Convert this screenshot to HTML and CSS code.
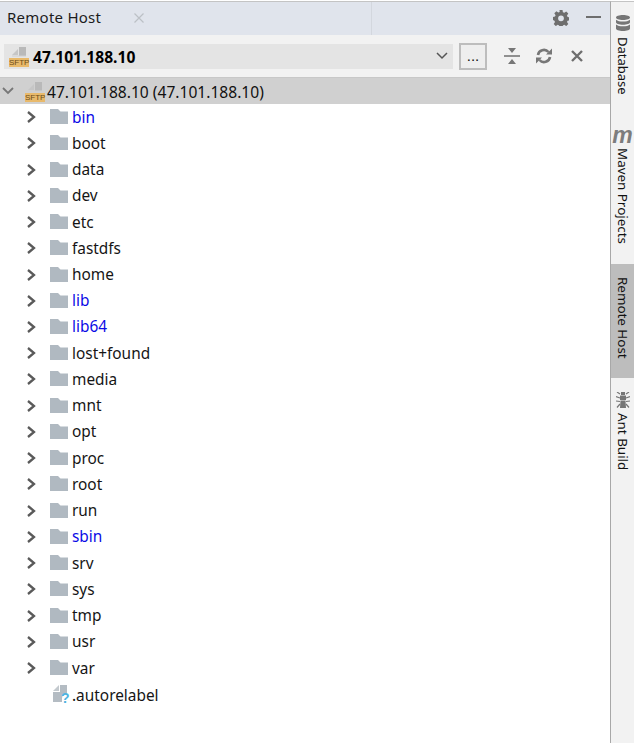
FILE: index.html
```html
<!DOCTYPE html>
<html lang="en">
<head>
<meta charset="utf-8">
<title>Remote Host</title>
<link rel="stylesheet" href="styles.css">
</head>
<body>
<svg class="defs" width="0" height="0" aria-hidden="true">
  <defs>
    <symbol id="chev" viewBox="0 0 12 14"><path d="M3 2l6 5-6 5" fill="none" stroke="#5a5a5a" stroke-width="2.300"/></symbol>
    <symbol id="folder" viewBox="0 0 18 15"><path d="M0 0h8l2.500 2.500H18V15H0z" fill="#b0b9c1"/></symbol>
    <symbol id="sftp" viewBox="0 0 20 21"><path d="M3 9l6-6v6z" fill="#c6c6c6"/><path d="M10 1h7v9h-7z" fill="#b9b9b9"/><path d="M3 9.500h14v1H3z" fill="#cfcfcf"/><path d="M0 12h20v9H0z" fill="#e8b96b"/></symbol>
  </defs>
</svg>
<div class="app">
  <main class="panel">
    <header class="tabbar">
      <div class="tab">
        <span class="tab-title">Remote Host</span>
        <svg class="tab-close" viewBox="0 0 10 10" width="10" height="10"><path d="M0.500 0.500l9 9M9.500 0.500l-9 9" stroke="#bcc0c6" stroke-width="1.200"/></svg>
      </div>
      <div class="tab-rest">
        <svg class="gear" viewBox="0 0 16 16" width="16" height="16"><path fill="#6e6e6e" fill-rule="evenodd" d="M6.500 0h3l.4 2.200 1.400.6L13.200 1.500l2.100 2.100-1.300 1.900.6 1.400 2.200.4v3l-2.200.4-.6 1.400 1.300 1.900-2.100 2.100-1.900-1.300-1.400.6-.4 2.200h-3l-.4-2.200-1.400-.6-1.900 1.300-2.100-2.100 1.300-1.900-.6-1.400L-.2 10V7l2.200-.4.600-1.400-1.300-1.900 2.100-2.100 1.900 1.300 1.400-.6zM8 5.400a2.900 2.900 0 1 0 0 5.800 2.900 2.900 0 0 0 0-5.800z"/></svg>
        <span class="minimize"></span>
      </div>
    </header>
    <div class="toolbar">
      <div class="combo">
        <svg class="sftp-icon" width="20" height="21"><use href="#sftp"/></svg>
        <span class="sftp-tag tag-combo">SFTP</span>
        <span class="combo-text">47.101.188.10</span>
        <svg class="combo-arrow" viewBox="0 0 12 8" width="12" height="8"><path d="M1 1l5 5 5-5" fill="none" stroke="#555" stroke-width="1.500"/></svg>
      </div>
      <button class="more" type="button">...</button>
      <div class="actions">
        <svg viewBox="0 0 16 16" width="16" height="16"><path d="M0 7.200h16v1.600H0z" fill="#777"/><path d="M4 0h8L8 5zM4 16h8l-4-5z" fill="#777"/></svg>
        <svg viewBox="0 0 16 16" width="16" height="16"><path d="M2 7a6 5.800 0 0 1 10.500-3M14 9a6 5.800 0 0 1-10.500 3" fill="none" stroke="#777" stroke-width="2.600"/><path d="M10 6.500h6V.5zM6 9.500H0v6z" fill="#777"/></svg>
        <svg class="action-close" viewBox="0 0 12 12" width="12" height="12"><path d="M1 1l10 10M11 1L1 11" stroke="#6e6e6e" stroke-width="2.400"/></svg>
      </div>
    </div>
    <div class="root-row">
      <svg class="root-chev" viewBox="0 0 12 8" width="12" height="8"><path d="M1 1l5 5 5-5" fill="none" stroke="#777" stroke-width="1.800"/></svg>
      <svg class="sftp-icon root-icon" width="20" height="21"><use href="#sftp"/></svg>
      <span class="sftp-tag tag-root">SFTP</span>
      <span class="root-label">47.101.188.10 (47.101.188.10)</span>
    </div>
    <ul class="tree">
      <li class="row"><svg class="chev"><use href="#chev"/></svg><svg class="folder"><use href="#folder"/></svg><span class="name link">bin</span></li>
      <li class="row"><svg class="chev"><use href="#chev"/></svg><svg class="folder"><use href="#folder"/></svg><span class="name">boot</span></li>
      <li class="row"><svg class="chev"><use href="#chev"/></svg><svg class="folder"><use href="#folder"/></svg><span class="name">data</span></li>
      <li class="row"><svg class="chev"><use href="#chev"/></svg><svg class="folder"><use href="#folder"/></svg><span class="name">dev</span></li>
      <li class="row"><svg class="chev"><use href="#chev"/></svg><svg class="folder"><use href="#folder"/></svg><span class="name">etc</span></li>
      <li class="row"><svg class="chev"><use href="#chev"/></svg><svg class="folder"><use href="#folder"/></svg><span class="name">fastdfs</span></li>
      <li class="row"><svg class="chev"><use href="#chev"/></svg><svg class="folder"><use href="#folder"/></svg><span class="name">home</span></li>
      <li class="row"><svg class="chev"><use href="#chev"/></svg><svg class="folder"><use href="#folder"/></svg><span class="name link">lib</span></li>
      <li class="row"><svg class="chev"><use href="#chev"/></svg><svg class="folder"><use href="#folder"/></svg><span class="name link">lib64</span></li>
      <li class="row"><svg class="chev"><use href="#chev"/></svg><svg class="folder"><use href="#folder"/></svg><span class="name">lost+found</span></li>
      <li class="row"><svg class="chev"><use href="#chev"/></svg><svg class="folder"><use href="#folder"/></svg><span class="name">media</span></li>
      <li class="row"><svg class="chev"><use href="#chev"/></svg><svg class="folder"><use href="#folder"/></svg><span class="name">mnt</span></li>
      <li class="row"><svg class="chev"><use href="#chev"/></svg><svg class="folder"><use href="#folder"/></svg><span class="name">opt</span></li>
      <li class="row"><svg class="chev"><use href="#chev"/></svg><svg class="folder"><use href="#folder"/></svg><span class="name">proc</span></li>
      <li class="row"><svg class="chev"><use href="#chev"/></svg><svg class="folder"><use href="#folder"/></svg><span class="name">root</span></li>
      <li class="row"><svg class="chev"><use href="#chev"/></svg><svg class="folder"><use href="#folder"/></svg><span class="name">run</span></li>
      <li class="row"><svg class="chev"><use href="#chev"/></svg><svg class="folder"><use href="#folder"/></svg><span class="name link">sbin</span></li>
      <li class="row"><svg class="chev"><use href="#chev"/></svg><svg class="folder"><use href="#folder"/></svg><span class="name">srv</span></li>
      <li class="row"><svg class="chev"><use href="#chev"/></svg><svg class="folder"><use href="#folder"/></svg><span class="name">sys</span></li>
      <li class="row"><svg class="chev"><use href="#chev"/></svg><svg class="folder"><use href="#folder"/></svg><span class="name">tmp</span></li>
      <li class="row"><svg class="chev"><use href="#chev"/></svg><svg class="folder"><use href="#folder"/></svg><span class="name">usr</span></li>
      <li class="row"><svg class="chev"><use href="#chev"/></svg><svg class="folder"><use href="#folder"/></svg><span class="name">var</span></li>
      <li class="row file-row">
        <span class="file">
          <svg viewBox="0 0 19 19" width="19" height="19"><path d="M0 6l6-6v6z" fill="#c3c9ce"/><path d="M7 0h7v8.500A5 5 0 0 0 9 13.500V17H0V7h7z" fill="#b4bcc3"/></svg>
          <span class="file-q">?</span>
        </span>
        <span class="name">.autorelabel</span>
      </li>
    </ul>
  </main>
  <aside class="sidebar">
    <div class="side-item side-db">
      <svg viewBox="0 0 14 16" width="14" height="16"><path fill="#767676" d="M0 2.500C0 1 3 0 7 0s7 1 7 2.500S11 5 7 5 0 4 0 2.500zM0 4.700C1.500 6 4 6.500 7 6.500s5.500-.5 7-1.800v2.600C14 8.800 11 9.800 7 9.800S0 8.800 0 7.300zM0 9.500c1.500 1.300 4 1.800 7 1.800s5.500-.5 7-1.800v4C14 15 11 16 7 16s-7-1-7-2.500z"/></svg>
      <span class="side-text">Database</span>
    </div>
    <div class="side-item side-maven">
      <span class="maven-m">m</span>
      <span class="side-text">Maven Projects</span>
    </div>
    <div class="side-item side-remote">
      <span class="side-text">Remote Host</span>
    </div>
    <div class="side-item side-ant">
      <svg viewBox="0 0 14 16" width="14" height="16"><path fill="#767676" d="M5 0h4v3H5zM4 3.500h6V8H4zM4.500 8.500h5L10 16H4z"/><path d="M4 2L1 0M10 2l3-2M4 6L0 4.500M10 6l4-1.500M4 9.500L0 9M10 9.500l4-.5M4 12l-3 3.500M10 12l3 3.500" stroke="#767676" stroke-width="1.200" fill="none"/></svg>
      <span class="side-text">Ant Build</span>
    </div>
  </aside>
</div>
</body>
</html>
```
FILE: styles.css
```css
* { box-sizing: border-box; }
html, body { margin: 0; padding: 0; height: 100%; background: #fff; }
body { font-family: "Noto Sans", "Noto Sans CJK SC", sans-serif; color: #1a1a1a; overflow: hidden; }
.defs { position: absolute; }
.app { display: flex; width: 634px; height: 743px; }
.panel { width: 610px; display: flex; flex-direction: column; }

.tabbar { height: 34px; margin-top: 1px; border-top: 1px solid #c4c4c4; background: #e0e4ec; display: flex; flex: none; }
.tab { width: 372px; display: flex; align-items: center; padding-left: 7px; border-right: 1px solid #d3d7de; }
.tab-title { font-size: 15px; letter-spacing: .25px; color: #1c1c1c; margin-top: -3px; }
.tab-close { margin-left: 33px; margin-top: -1px; }
.tab-rest { flex: 1; display: flex; align-items: center; justify-content: flex-end; padding-right: 9px; gap: 17px; }
.gear { margin-top: -2px; }
.minimize { width: 15px; height: 2px; background: #6e6e6e; margin-top: -3px; }

.toolbar { height: 43px; flex: none; background: #f2f2f2; border-bottom: 1px solid #c8c8c8; display: flex; align-items: center; padding: 0 0 0 4px; }
.combo { width: 449px; height: 25px; background: #e4e4e4; display: flex; align-items: center; padding: 0 5px 0 5px; position: relative; }
.combo-text { font-weight: 700; font-size: 15.600px; color: #000; margin-left: 4px; flex: 1; margin-top: 1px; }
.sftp-icon { flex: none; }
.sftp-tag { position: absolute; font-family: "Liberation Sans", sans-serif; font-size: 8px; line-height: 9px; width: 20px; text-align: center; color: #6b4c18; }
.tag-combo { left: 5px; top: 14px; }
.more { width: 28px; height: 27px; margin-left: 6px; background: #eeeeee; border: 2px solid #bdbdbd; font-size: 15px; line-height: 15px; padding: 0 0 1px; color: #111; font-family: "Liberation Sans", sans-serif; }
.actions { display: flex; align-items: center; gap: 16px; margin-left: 17px; }
.action-close { margin-left: 3px; }

.root-row { height: 26px; flex: none; background: #d0d0d0; display: flex; align-items: center; padding-left: 2px; position: relative; }
.root-chev { margin-right: 11px; }
.root-icon { margin-top: 1px; }
.tag-root { left: 25px; top: 15px; }
.root-label { font-size: 15.600px; margin-left: 2px; margin-top: 1px; color: #111; }

.tree { list-style: none; margin: 0; padding: 0; }
.row { height: 26.240px; display: flex; align-items: center; padding-left: 25px; }
.chev { width: 12px; height: 14px; flex: none; }
.folder { width: 18px; height: 15px; margin-left: 13px; margin-top: -1px; flex: none; }
.name { font-size: 15.400px; margin-left: 4px; color: #151515; }
.name.link { color: #0a0ae6; }
.file-row { padding-left: 53px; }
.file { flex: none; margin-top: 2px; position: relative; width: 19px; height: 20px; }
.file svg { display: block; }
.file-row .name { margin-left: 0; margin-top: 2px; }
.file-q { position: absolute; left: 8px; top: 6px; font-family: "Liberation Sans", sans-serif; font-size: 14px; line-height: 14px; font-weight: 700; color: #4fb3e0; }

.sidebar { width: 24px; flex: none; margin-top: 1px; background: #f2f2f2; border-left: 1px solid #a8a8a8; border-top: 1px solid #c4c4c4; display: flex; flex-direction: column; align-items: stretch; }
.side-item { display: flex; flex-direction: column; align-items: center; gap: 6px; flex: none; }
.side-db { padding-top: 13px; height: 110px; }
.side-maven { height: 152px; padding-top: 15px; gap: 4px; }
.side-remote { height: 114px; background: #bdbdbd; padding-top: 13px; }
.side-ant { padding-top: 14px; gap: 5px; }
.side-text { writing-mode: vertical-rl; font-size: 13.400px; line-height: 16px; color: #111; white-space: nowrap; }
.side-db .side-text { font-size: 13px; }
.maven-m { font-family: "Liberation Sans", sans-serif; font-weight: 700; font-style: italic; font-size: 23px; line-height: 17px; color: #7d7d7d; height: 17px; }
```
